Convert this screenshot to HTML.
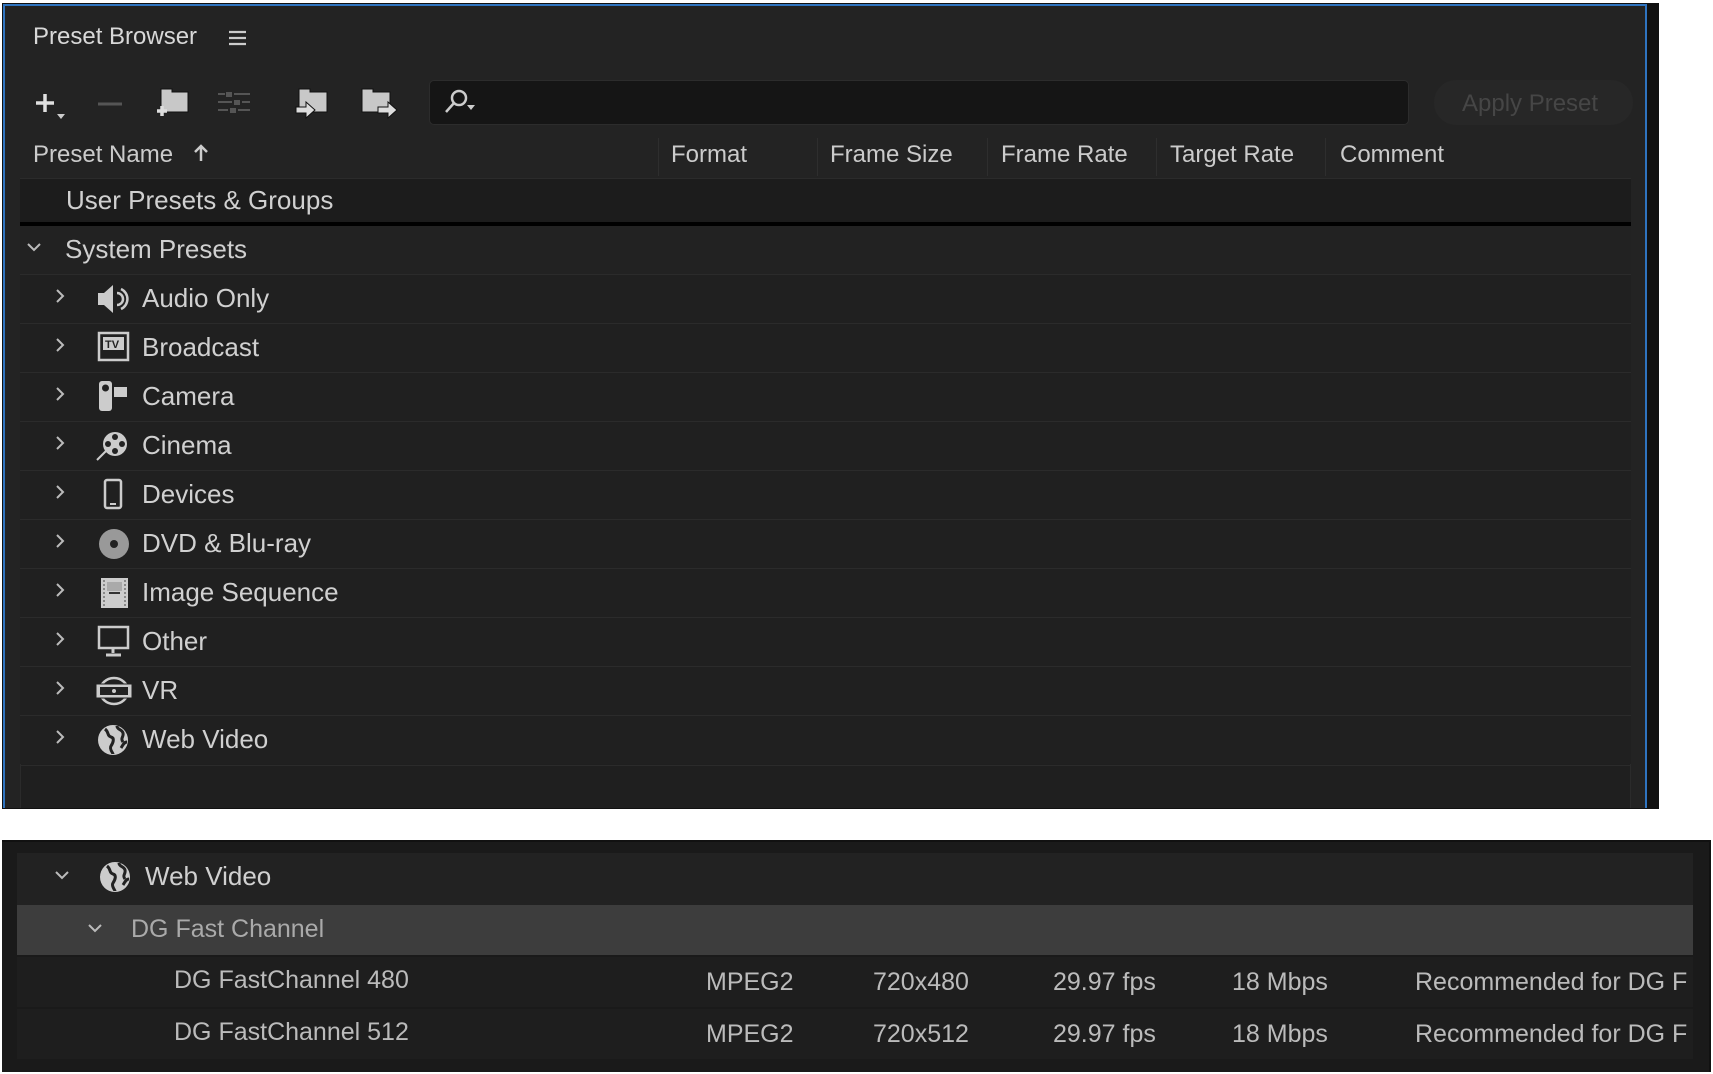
<!DOCTYPE html>
<html><head><meta charset="utf-8"><style>
body{margin:0;width:1713px;height:1074px;background:#fff;position:relative;overflow:hidden;font-family:"Liberation Sans",sans-serif;}
.a{position:absolute}
.t{position:absolute;color:#cbcbcb;font-size:24px;white-space:nowrap;line-height:1}
.l{font-size:26px;color:#d0d0d0}
.b{font-size:25px}
.row{position:absolute;left:20px;width:1611px;height:48px;background:#202020;border-top:1px solid #2b2b2b}
svg{position:absolute;overflow:visible}
</style></head><body>
<div class="a" style="left:2px;top:3px;width:1657px;height:806px;background:#111;"></div>
<div class="a" style="left:3px;top:4px;width:1644px;height:804px;background:#232323;border:2px solid #2f74c0;border-bottom:none;box-sizing:border-box;"></div>
<div class="t" style="left:33px;top:25px;color:#d8d8d8;">Preset Browser</div>
<svg style="left:228px;top:29px" width="20" height="18"><path d="M1 3h17M1 9h17M1 15h17" stroke="#ccc" stroke-width="2.2"/></svg>
<svg style="left:35px;top:92px" width="35" height="32"><path d="M10 2v18M1 11h18" stroke="#e0e0e0" stroke-width="3.5"/><path d="M22 22h8l-4 5z" fill="#ccc"/></svg>
<svg style="left:98px;top:101px" width="24" height="6"><path d="M0 3h24" stroke="#555" stroke-width="3"/></svg>
<svg style="left:155px;top:86px" width="38" height="32"><path d="M6 3h11v3h16v20H6z" fill="#c8c8c8" stroke="#111"/><path d="M2 25h10M7 20v10" stroke="#ddd" stroke-width="3.5"/></svg>
<svg style="left:218px;top:90px" width="34" height="26" fill="#555"><rect x="8" y="2" width="6" height="5"/><rect x="16" y="10" width="6" height="5"/><rect x="12" y="18" width="6" height="5"/><path d="M0 4h7M16 4h16M0 12h14M24 12h8M0 20h10M20 20h12" stroke="#555" stroke-width="2"/></svg>
<svg style="left:295px;top:85px" width="38" height="34"><path d="M4 4h11v3h17v20H4z" fill="#c8c8c8" stroke="#111"/><path d="M1 22h10v-5l9 8-9 8v-5H1z" fill="#ddd" stroke="#111"/></svg>
<svg style="left:360px;top:85px" width="40" height="34"><path d="M2 4h11v3h17v20H2z" fill="#c8c8c8" stroke="#111"/><path d="M18 22h10v-5l9 8-9 8v-5H18z" fill="#ddd" stroke="#111"/></svg>
<div class="a" style="left:429px;top:80px;width:980px;height:45px;background:#151515;border:1px solid #2c2c2c;border-radius:5px;box-sizing:border-box"></div>
<svg style="left:443px;top:89px" width="40" height="28"><circle cx="16" cy="9" r="7" stroke="#ccc" stroke-width="2.5" fill="none"/><path d="M11 14 3 23" stroke="#ccc" stroke-width="2.5"/><path d="M24 16h8l-4 5z" fill="#ccc"/></svg>
<div class="a" style="left:1434px;top:80px;width:199px;height:45px;background:#272727;border-radius:22px"></div>
<div class="t" style="left:1462px;top:92px;color:#464646;">Apply Preset</div>
<div class="t" style="left:33px;top:143px;">Preset Name</div>
<svg style="left:194px;top:143px" width="14" height="20"><path d="M7 18V3M1 9l6-6 6 6" stroke="#ccc" stroke-width="2.5" fill="none"/></svg>
<div class="a" style="left:658px;top:138px;width:1px;height:38px;background:#2e2e2e"></div>
<div class="a" style="left:817px;top:138px;width:1px;height:38px;background:#2e2e2e"></div>
<div class="a" style="left:987px;top:138px;width:1px;height:38px;background:#2e2e2e"></div>
<div class="a" style="left:1156px;top:138px;width:1px;height:38px;background:#2e2e2e"></div>
<div class="a" style="left:1325px;top:138px;width:1px;height:38px;background:#2e2e2e"></div>
<div class="t" style="left:671px;top:143px;">Format</div>
<div class="t" style="left:830px;top:143px;">Frame Size</div>
<div class="t" style="left:1001px;top:143px;">Frame Rate</div>
<div class="t" style="left:1170px;top:143px;">Target Rate</div>
<div class="t" style="left:1340px;top:143px;">Comment</div>
<div class="a" style="left:20px;top:178px;width:1611px;height:630px;background:#1f1f1f;border:1px solid #2b2b2b;border-bottom:none;box-sizing:border-box"></div>
<div class="a" style="left:20px;top:179px;width:1611px;height:44px;background:#1c1c1c"></div>
<div class="t l" style="left:66px;top:187px;">User Presets &amp; Groups</div>
<div class="a" style="left:20px;top:222px;width:1611px;height:4px;background:#000"></div>
<div class="row" style="top:226px;border-top:none;background:#222"></div>
<svg style="left:27px;top:243px" width="14" height="10"><path d="M1 1l6 6 6-6" stroke="#bbb" stroke-width="2" fill="none"/></svg>
<div class="t l" style="left:65px;top:236px;">System Presets</div>

<div class="row" style="top:274px"></div><div class="row" style="top:323px"></div><div class="row" style="top:372px"></div><div class="row" style="top:421px"></div><div class="row" style="top:470px"></div><div class="row" style="top:519px"></div><div class="row" style="top:568px"></div><div class="row" style="top:617px"></div><div class="row" style="top:666px"></div><div class="row" style="top:715px"></div>
<div class="a" style="left:20px;top:765px;width:1611px;height:1px;background:#2b2b2b"></div>

<svg style="left:55px;top:289px" width="10" height="500"><g stroke="#bbb" stroke-width="2" fill="none"><path d="M2 1l6 6-6 6"/><path d="M2 50l6 6-6 6"/><path d="M2 99l6 6-6 6"/><path d="M2 148l6 6-6 6"/><path d="M2 197l6 6-6 6"/><path d="M2 246l6 6-6 6"/><path d="M2 295l6 6-6 6"/><path d="M2 344l6 6-6 6"/><path d="M2 393l6 6-6 6"/><path d="M2 442l6 6-6 6"/></g></svg>
<svg style="left:97px;top:284px" width="32" height="30"><path d="M1 9h6l9-8v28l-9-8H1z" fill="#ccc"/><path d="M20 9a6 6 0 0 1 0 12M24 5a11 11 0 0 1 0 20" stroke="#ccc" stroke-width="2.5" fill="none"/></svg>
<svg style="left:98px;top:332px" width="32" height="30"><rect x="1" y="1" width="29" height="27" fill="none" stroke="#ccc" stroke-width="2.5"/><rect x="5" y="5" width="21" height="13" fill="#ccc"/><text x="7" y="16" font-size="11" font-weight="bold" fill="#222" font-family="Liberation Sans">TV</text></svg>
<svg style="left:98px;top:380px" width="32" height="32"><rect x="1" y="1" width="13" height="30" rx="3" fill="#ccc"/><circle cx="7.5" cy="8" r="3.5" fill="#222"/><rect x="16" y="7" width="13" height="10" fill="#ccc"/></svg>
<svg style="left:96px;top:429px" width="34" height="32"><circle cx="19" cy="15" r="12" fill="#ccc"/><g fill="#222"><circle cx="19" cy="8" r="3"/><circle cx="19" cy="22" r="3"/><circle cx="12" cy="15" r="3"/><circle cx="26" cy="15" r="3"/></g><path d="M1 31l10-10" stroke="#ccc" stroke-width="2"/></svg>
<svg style="left:103px;top:478px" width="22" height="32"><rect x="2" y="2" width="16" height="28" rx="2" fill="none" stroke="#ccc" stroke-width="2.5"/><path d="M7 26h6" stroke="#ccc" stroke-width="2"/></svg>
<svg style="left:98px;top:528px" width="32" height="32"><circle cx="16" cy="16" r="15" fill="#999"/><circle cx="16" cy="16" r="4" fill="#222"/></svg>
<svg style="left:100px;top:577px" width="30" height="32"><rect x="1" y="1" width="27" height="30" fill="#ccc"/><rect x="7" y="5" width="15" height="9" fill="#aaa"/><path d="M9 16h11" stroke="#333" stroke-width="2"/><path d="M4 3v26M25 3v26" stroke="#888" stroke-width="2" stroke-dasharray="2 2"/></svg>
<svg style="left:97px;top:625px" width="34" height="32"><rect x="2" y="2" width="29" height="21" fill="none" stroke="#ccc" stroke-width="2.5"/><path d="M16 23v5M9 30h15" stroke="#ccc" stroke-width="3"/></svg>
<svg style="left:95px;top:675px" width="38" height="32"><ellipse cx="19" cy="16" rx="14" ry="13" fill="none" stroke="#ccc" stroke-width="2.5"/><rect x="1" y="9" width="36" height="14" fill="#ccc" stroke="#222" stroke-width="1"/><rect x="5" y="12" width="28" height="8" fill="#222"/><circle cx="19" cy="16" r="2" fill="#ccc"/></svg>
<svg style="left:97px;top:723px" width="34" height="34"><circle cx="16" cy="17" r="15" fill="#ccc"/><path d="M8 6c4 3 2 7 6 8s2 6 0 9 2 7 2 8M20 3c0 4 5 3 6 7s-3 5 0 9M30 19c-3 0-4 3-6 6" stroke="#222" stroke-width="3" fill="none"/></svg>
<div class="t l" style="left:142px;top:285px;">Audio Only</div>
<div class="t l" style="left:142px;top:334px;">Broadcast</div>
<div class="t l" style="left:142px;top:383px;">Camera</div>
<div class="t l" style="left:142px;top:432px;">Cinema</div>
<div class="t l" style="left:142px;top:481px;">Devices</div>
<div class="t l" style="left:142px;top:530px;">DVD &amp; Blu-ray</div>
<div class="t l" style="left:142px;top:579px;">Image Sequence</div>
<div class="t l" style="left:142px;top:628px;">Other</div>
<div class="t l" style="left:142px;top:677px;">VR</div>
<div class="t l" style="left:142px;top:726px;">Web Video</div>

<div class="a" style="left:2px;top:840px;width:1709px;height:232px;background:#1a1a1a;border-top:2px solid #111;border-right:2px solid #111;box-sizing:border-box"></div>
<div class="a" style="left:17px;top:853px;width:1676px;height:52px;background:#222"></div>
<svg style="left:55px;top:871px" width="14" height="10"><path d="M1 1l6 6 6-6" stroke="#bbb" stroke-width="2" fill="none"/></svg>
<svg style="left:99px;top:860px" width="34" height="34"><circle cx="16" cy="17" r="15" fill="#ccc"/><path d="M8 6c4 3 2 7 6 8s2 6 0 9 2 7 2 8M20 3c0 4 5 3 6 7s-3 5 0 9M30 19c-3 0-4 3-6 6" stroke="#222" stroke-width="3" fill="none"/></svg>
<div class="t l" style="left:145px;top:863px;">Web Video</div>
<div class="a" style="left:17px;top:905px;width:1676px;height:50px;background:#3d3d3d"></div>
<svg style="left:88px;top:924px" width="14" height="10"><path d="M1 1l6 6 6-6" stroke="#bbb" stroke-width="2" fill="none"/></svg>
<div class="t b" style="left:131px;top:917px;color:#aaa;">DG Fast Channel</div>
<div class="a" style="left:17px;top:957px;width:1676px;height:50px;background:#1e1e1e"></div>
<div class="a" style="left:17px;top:1009px;width:1676px;height:50px;background:#1e1e1e"></div>
<div class="t b" style="left:174px;top:968px;color:#bbb">DG FastChannel 480</div>
<div class="t b" style="left:706px;top:970px;color:#bbb">MPEG2</div>
<div class="t b" style="left:873px;top:970px;color:#bbb">720x480</div>
<div class="t b" style="left:1053px;top:970px;color:#bbb">29.97 fps</div>
<div class="t b" style="left:1232px;top:970px;color:#bbb">18 Mbps</div>
<div class="t b" style="left:1415px;top:970px;color:#bbb">Recommended for DG F</div>
<div class="t b" style="left:174px;top:1020px;color:#bbb">DG FastChannel 512</div>
<div class="t b" style="left:706px;top:1022px;color:#bbb">MPEG2</div>
<div class="t b" style="left:873px;top:1022px;color:#bbb">720x512</div>
<div class="t b" style="left:1053px;top:1022px;color:#bbb">29.97 fps</div>
<div class="t b" style="left:1232px;top:1022px;color:#bbb">18 Mbps</div>
<div class="t b" style="left:1415px;top:1022px;color:#bbb">Recommended for DG F</div>
<div class="a" style="left:1693px;top:957px;width:16px;height:110px;background:#1a1a1a"></div>
</body></html>
